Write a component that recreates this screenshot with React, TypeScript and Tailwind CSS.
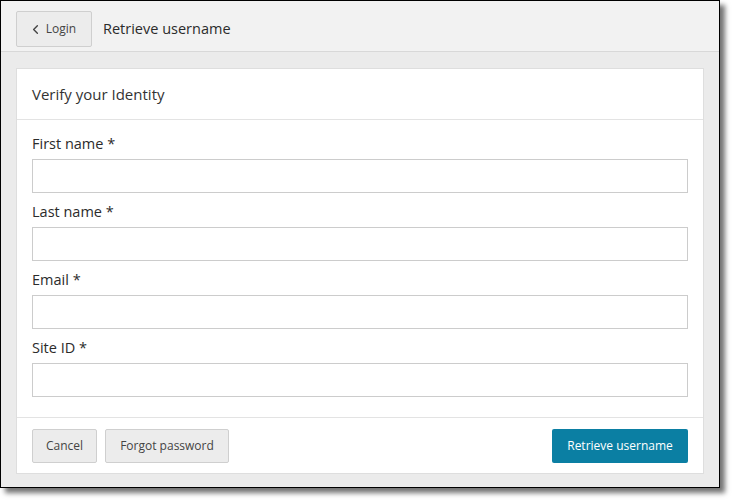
import { ChevronLeft } from "lucide-react";

const fields = ["First name *", "Last name *", "Email *", "Site ID *"];

function Field({ label }: { label: string }) {
  return (
    <div className="flex flex-col">
      <label className="h-[20px] text-[14.5px] leading-[22px] font-medium text-[#2b2b2b]">{label}</label>
      <input
        type="text"
        className="mt-[6px] h-[34px] w-full border border-[#cccccc] bg-white px-2 text-[14px] outline-none"
      />
    </div>
  );
}

export default function App() {
  return (
    <div className="w-[734px] h-[504px] bg-white" style={{ fontFamily: '"Open Sans", "Noto Sans", sans-serif' }}>
      <div className="w-[720px] h-[488px] flex flex-col border border-black bg-[#ebebeb] shadow-[5px_5px_5px_rgba(0,0,0,0.55)]">
        {/* top bar */}
        <div className="h-[51px] shrink-0 flex items-start pt-[10px] px-[15px] bg-[#f2f2f2] border-b border-[#d8d8d8]">
          <button className="h-[36px] w-[76px] flex items-center justify-center gap-[3px] rounded-[2px] border border-[#cfcfcf] bg-[#ececec] text-[12px] text-[#444]">
            <ChevronLeft className="h-[15px] w-[15px] -ml-[4px]" strokeWidth={2.2} />
            Login
          </button>
          <span className="ml-[11px] h-[36px] flex items-center text-[14.5px] font-medium text-[#2b2b2b]">Retrieve username</span>
        </div>

        <div className="flex-1 px-[15px] pt-[16px] pb-[13px]">
          <div className="h-[406px] flex flex-col bg-white border border-[#dedede]">
            <div className="h-[51px] shrink-0 flex items-center px-[15px] border-b border-[#e3e3e3] text-[15px] text-[#333]">
              Verify your Identity
            </div>

            <div className="flex flex-col gap-[8px] px-[15px] pt-[13px] pb-[20px]">
              {fields.map((f) => (
                <Field key={f} label={f} />
              ))}
            </div>

            <div className="flex items-center gap-[8px] px-[15px] pt-[11px] pb-[10px] border-t border-[#e3e3e3]">
              <button className="h-[34px] w-[65px] rounded-[2px] border border-[#cfcfcf] bg-[#ececec] text-[12px] text-[#444]">
                Cancel
              </button>
              <button className="h-[34px] w-[124px] rounded-[2px] border border-[#cfcfcf] bg-[#ececec] text-[12px] text-[#444]">
                Forgot password
              </button>
              <button className="ml-auto h-[34px] w-[136px] rounded-[2px] bg-[#0b7fa3] text-[12px] text-white">
                Retrieve username
              </button>
            </div>
          </div>
        </div>
      </div>
    </div>
  );
}
